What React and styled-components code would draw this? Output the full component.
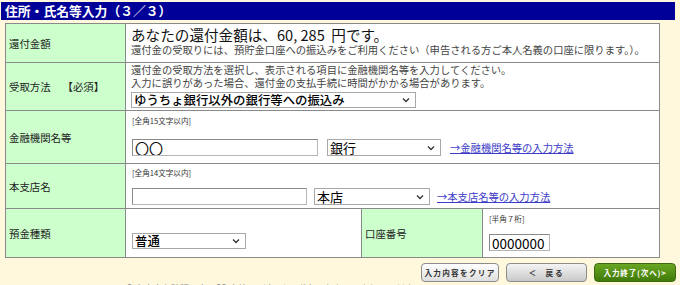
import React from "react";
import styled, { createGlobalStyle } from "styled-components";

const Global = createGlobalStyle`
  html, body { margin: 0; padding: 0; background: #fff8dc; }
  body { font-family: "Noto Sans CJK JP", "Noto Sans", sans-serif; color: #333; overflow: hidden; }
`;

const Page = styled.div`
  width: 680px;
  height: 285px;
  padding: 2px 5px 0 1px;
  box-sizing: border-box;
  overflow: hidden;
`;

const TitleBar = styled.div`
  height: 18px;
  background: #000099;
  color: #fff;
  font-weight: bold;
  font-size: 12.8px;
  line-height: 18px;
  padding-left: 4px;
`;

const Form = styled.div`
  margin: 3px 0 0 4px;
  width: 655px;
  display: grid;
  grid-template-columns: 119px 235px 120px 1fr;
  grid-template-rows: 38px 47px 52px 44px 48px;
  gap: 1px;
  padding: 1px;
  box-sizing: border-box;
  background: #8a8a8a;
`;

const Label = styled.div`
  background: #ccffcc;
  display: flex;
  align-items: center;
  padding-left: 3px;
  font-size: 10.4px;
  line-height: 13px;
  color: #222;
  white-space: pre;
`;

const Required = styled.span`
  margin-left: 12px;
`;

const Value = styled.div`
  background: #fff;
  grid-column: ${(p) => p.$span || "auto"};
  padding: ${(p) => p.$pad || "2px 5px"};
  display: flex;
  flex-direction: column;
  justify-content: ${(p) => p.$justify || "flex-start"};
  box-sizing: border-box;
  min-width: 0;
`;

const Headline = styled.div`
  font-size: 14.6px;
  line-height: 18px;
  color: #111;
  white-space: pre;
`;

const Note = styled.div`
  font-size: 10.3px;
  line-height: 12.5px;
  color: #444;
  white-space: nowrap;
`;

const Hint = styled.div`
  font-size: 7.6px;
  line-height: 10px;
  color: #333;
  height: 10px;
  margin: ${(p) => p.$m || "0"};
`;

const FieldRow = styled.div`
  display: flex;
  align-items: center;
  gap: ${(p) => p.$gap || "9px"};
`;

const TextInput = styled.input`
  box-sizing: border-box;
  width: ${(p) => p.$w};
  height: 17px;
  border: 1px solid #b5b5b5;
  border-top-color: #8a8a8a;
  border-left-color: #8a8a8a;
  padding: 0 2px;
  font-family: "Noto Sans CJK JP", "Liberation Sans", sans-serif;
  font-size: ${(p) => p.$fs || "14px"};
  line-height: 15px;
  color: #000;
  background: #fff;
  outline: none;
`;

const SelectBox = styled.div`
  position: relative;
  box-sizing: border-box;
  width: ${(p) => p.$w};
  height: ${(p) => p.$h || "17px"};
  border: 1px solid #a8a8a8;
  background: #fff;
  padding: 0 16px 0 2px;
  display: flex;
  align-items: center;
  font-size: ${(p) => p.$fs || "13px"};
  font-weight: ${(p) => p.$fw || "normal"};
  line-height: 1;
  color: #000;
  white-space: nowrap;
  overflow: hidden;
  cursor: default;
`;

const Chevron = styled.svg`
  position: absolute;
  right: 5px;
  top: 50%;
  margin-top: -3px;
  width: 8px;
  height: 6px;
`;

const Link = styled.a`
  font-size: 10.3px;
  color: #3c3cc8;
  text-decoration: underline;
  white-space: nowrap;
`;

const Buttons = styled.div`
  display: flex;
  justify-content: flex-end;
  gap: 7px;
  margin-top: 5px;
  margin-right: -1px;
`;

const Button = styled.button`
  box-sizing: border-box;
  width: ${(p) => p.$w};
  height: 19px;
  border-radius: 4px;
  border: 1px solid ${(p) => (p.$primary ? "#3d6a10" : "#8c8c8c")};
  background: ${(p) =>
    p.$primary
      ? "linear-gradient(#6aa622, #3f7a08)"
      : p.$dark
      ? "linear-gradient(#f4f4f4, #c9c9c9)"
      : "linear-gradient(#ffffff, #dedede)"};
  color: ${(p) => (p.$primary ? "#fff" : "#333")};
  font-family: "Noto Sans CJK JP", sans-serif;
  font-size: 7.6px;
  font-weight: bold;
  letter-spacing: ${(p) => p.$ls || "1.3px"};
  padding: 0;
  white-space: pre;
  display: flex;
  align-items: center;
  justify-content: center;
`;

const Footer = styled.div`
  margin: 1px 0 0 114px;
  font-size: 9px;
  line-height: 11px;
  color: #888;
  white-space: nowrap;
`;

const Dropdown = ({ w, h, fs, fw, value }) => (
  <SelectBox role="combobox" $w={w} $h={h} $fs={fs} $fw={fw}>
    {value}
    <Chevron viewBox="0 0 8 6">
      <path d="M1 1.5 L4 4.5 L7 1.5" fill="none" stroke="#333" strokeWidth="1.3" />
    </Chevron>
  </SelectBox>
);

export default function App() {
  return (
    <>
      <Global />
      <Page>
        <TitleBar>住所・氏名等入力（３／３）</TitleBar>
        <Form>
          <Label>還付金額</Label>
          <Value $span="2 / 5" $pad="2px 5px 0">
            <Headline>{"あなたの還付金額は、60, 285  円です。"}</Headline>
            <Note>還付金の受取りには、預貯金口座への振込みをご利用ください（申告される方ご本人名義の口座に限ります。）。</Note>
          </Value>

          <Label>
            受取方法<Required>【必須】</Required>
          </Label>
          <Value $span="2 / 5" $pad="1px 5px 0">
            <Note>還付金の受取方法を選択し、表示される項目に金融機関名等を入力してください。</Note>
            <Note>入力に誤りがあった場合、還付金の支払手続に時間がかかる場合があります。</Note>
            <div style={{ height: 3 }} />
            <Dropdown w="285px" h="16px" fs="12.4px" fw="500" value="ゆうちょ銀行以外の銀行等への振込み" />
          </Value>

          <Label>金融機関名等</Label>
          <Value $span="2 / 5" $pad="5px 6px 0">
            <Hint $m="0 0 13px">[全角15文字以内]</Hint>
            <FieldRow $gap="9px">
              <TextInput $w="186px" defaultValue="〇〇" />
              <Dropdown w="114px" value="銀行" />
              <Link href="#">→金融機関名等の入力方法</Link>
            </FieldRow>
          </Value>

          <Label>本支店名</Label>
          <Value $span="2 / 5" $pad="4px 6px 0">
            <Hint $m="0 0 10px">[全角14文字以内]</Hint>
            <FieldRow $gap="7px">
              <TextInput $w="175px" defaultValue="" />
              <Dropdown w="116px" value="本店" />
              <Link href="#">→本支店名等の入力方法</Link>
            </FieldRow>
          </Value>

          <Label>預金種類</Label>
          <Value $pad="0 6px 8px" $justify="flex-end">
            <Dropdown w="114px" h="16px" fs="12.4px" fw="500" value="普通" />
          </Value>
          <Label>口座番号</Label>
          <Value $pad="5px 6px 0">
            <Hint $m="0 0 10px">[半角７桁]</Hint>
            <TextInput $w="61px" $fs="13.5px" defaultValue="0000000" />
          </Value>
        </Form>
        <Buttons>
          <Button $w="78px">入力内容をクリア</Button>
          <Button $w="81px" $dark $ls="2px">{"＜  戻る"}</Button>
          <Button $w="82px" $primary $ls="0.8px">入力終了(次へ)&gt;</Button>
        </Buttons>
        <Footer>※ 入力内容を確認の上、「入力終了（次へ）」ボタンをクリックしてください。</Footer>
      </Page>
    </>
  );
}
